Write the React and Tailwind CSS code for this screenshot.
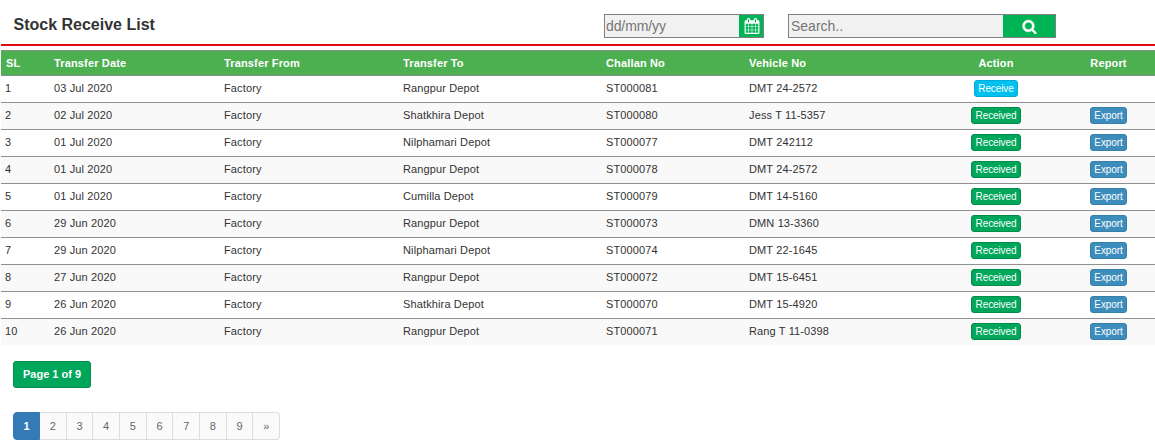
const rows = [
  ["1", "03 Jul 2020", "Rangpur Depot", "ST000081", "DMT 24-2572"],
  ["2", "02 Jul 2020", "Shatkhira Depot", "ST000080", "Jess T 11-5357"],
  ["3", "01 Jul 2020", "Nilphamari Depot", "ST000077", "DMT 242112"],
  ["4", "01 Jul 2020", "Rangpur Depot", "ST000078", "DMT 24-2572"],
  ["5", "01 Jul 2020", "Cumilla Depot", "ST000079", "DMT 14-5160"],
  ["6", "29 Jun 2020", "Rangpur Depot", "ST000073", "DMN 13-3360"],
  ["7", "29 Jun 2020", "Nilphamari Depot", "ST000074", "DMT 22-1645"],
  ["8", "27 Jun 2020", "Rangpur Depot", "ST000072", "DMT 15-6451"],
  ["9", "26 Jun 2020", "Shatkhira Depot", "ST000070", "DMT 15-4920"],
  ["10", "26 Jun 2020", "Rangpur Depot", "ST000071", "Rang T 11-0398"],
];

const cols =
  "grid grid-cols-[49px_170px_179px_203px_143px_184px_134px_91px] items-center";

function CalendarIcon() {
  return (
    <svg viewBox="0 0 1792 1792" className="size-4 fill-white">
      <path d="M192 1664h288v-288h-288v288zm352 0h320v-288h-320v288zm-352-352h288v-320h-288v320zm352 0h320v-320h-320v320zm-352-384h288v-288h-288v288zm736 736h320v-288h-320v288zm-384-736h320v-288h-320v288zm768 736h288v-288h-288v288zm-384-352h320v-320h-320v320zm-352-864v-288q0-13-9.500-22.500t-22.500-9.500h-64q-13 0-22.500 9.500t-9.500 22.500v288q0 13 9.500 22.500t22.500 9.500h64q13 0 22.500-9.500t9.500-22.500zm736 864h288v-320h-288v320zm-384-384h320v-288h-320v288zm384 0h288v-288h-288v288zm32-480v-288q0-13-9.500-22.500t-22.500-9.500h-64q-13 0-22.500 9.500t-9.500 22.500v288q0 13 9.500 22.500t22.500 9.500h64q13 0 22.500-9.500t9.500-22.500zm384-64v1280q0 52-38 90t-90 38h-1408q-52 0-90-38t-38-90v-1280q0-52 38-90t90-38h128v-96q0-66 47-113t113-47h64q66 0 113 47t47 113v96h384v-96q0-66 47-113t113-47h64q66 0 113 47t47 113v96h128q52 0 90 38t38 90z" />
    </svg>
  );
}

function SearchIcon() {
  return (
    <svg viewBox="0 0 1792 1792" className="size-[15px] fill-white stroke-white stroke-[50]">
      <path d="M1216 832q0-185-131.500-316.500t-316.500-131.500-316.500 131.500-131.500 316.500 131.500 316.500 316.500 131.500 316.500-131.500 131.500-316.500zm512 832q0 52-38 90t-90 38q-54 0-90-38l-343-342q-179 124-399 124-143 0-273.500-55.500t-225-150-150-225-55.500-273.500 55.500-273.500 150-225 225-150 273.500-55.500 273.500 55.500 225 150 150 225 55.500 273.500q0 220-124 399l343 343q37 37 37 90z" />
    </svg>
  );
}

export default function App() {
  return (
    <div className="h-[445px] w-[1155px] overflow-hidden bg-white font-['Liberation_Sans',Arial,sans-serif] text-[11px] text-[#333]">
      <header className="flex h-11 items-start">
        <h1 className="w-[604px] pt-[15px] pl-[13.500px] text-base leading-5 font-bold">
          Stock Receive List
        </h1>
        <div className="mt-[14px] flex h-6 w-40 border border-[#808080]">
          <input
            placeholder="dd/mm/yy"
            className="w-[134px] bg-[#f1f1f1] pl-px text-sm tracking-[-0.1px] outline-none placeholder:text-[#757575]"
          />
          <button className="flex flex-1 items-center justify-center bg-[#00b355] pl-px">
            <CalendarIcon />
          </button>
        </div>
        <div className="mt-[14px] ml-6 flex h-6 w-[268px] border border-[#808080]">
          <input
            placeholder="Search.."
            className="w-[214px] bg-[#f1f1f1] pl-[2px] text-sm outline-none placeholder:text-[#757575]"
          />
          <button className="flex flex-1 items-center justify-center bg-[#00b355] pl-px">
            <SearchIcon />
          </button>
        </div>
      </header>
      <div className="ml-px h-[2px] bg-[#df0a14]" />
      <main className="mt-1 ml-px">
        <div
          className={`${cols} h-[26px] border-y border-[#858f85] bg-[#4caf50] font-bold tracking-[0.15px] text-white`}
        >
          <span className="pl-[5px]">SL</span>
          <span className="pl-1">Transfer Date</span>
          <span className="pl-1">Transfer From</span>
          <span className="pl-1">Transfer To</span>
          <span className="pl-1">Challan No</span>
          <span className="pl-1">Vehicle No</span>
          <span className="text-center">Action</span>
          <span className="text-center">Report</span>
        </div>
        {rows.map(([sl, date, to, challan, vehicle], i) => (
          <div
            key={sl}
            className={`${cols} h-[27px] border-b border-[#909090] pb-[2px] tracking-[0.13px] last:h-[26px] last:border-b-0 even:bg-white odd:bg-[#f9f9f9]`}
          >
            <span className="pl-1">{sl}</span>
            <span className="pl-1">{date}</span>
            <span className="pl-1">Factory</span>
            <span className="pl-1">{to}</span>
            <span className="pl-1">{challan}</span>
            <span className="pl-1">{vehicle}</span>
            <span className="flex justify-center">
              {i === 0 ? (
                <button className="h-[17px] w-11 rounded-[3px] border border-[#00acd6] bg-[#00c0ef] text-[10px] leading-[15px] tracking-[-0.1px] text-white">
                  Receive
                </button>
              ) : (
                <button className="h-[17px] w-[50px] rounded-[3px] border border-[#008d4c] bg-[#00a65a] text-[10px] leading-[15px] tracking-[-0.1px] text-white">
                  Received
                </button>
              )}
            </span>
            <span className="flex justify-center">
              {i > 0 && (
                <button className="h-[17px] w-[37px] rounded-[3px] border border-[#367fa9] bg-[#3c8dbc] text-[10px] leading-[15px] tracking-[-0.1px] text-white">
                  Export
                </button>
              )}
            </span>
          </div>
        ))}
      </main>
      <footer className="pt-4 pl-[13px]">
        <button className="block h-[27px] w-[78px] rounded-[3px] border border-[#008d4c] bg-[#00a65a] text-[11px] font-bold text-white">
          Page 1 of 9
        </button>
        <nav className="mt-6 flex h-7 w-[267px] text-[#666]">
          <span className="flex w-[27px] items-center justify-center rounded-l border border-[#337ab7] bg-[#337ab7] font-bold text-white">
            1
          </span>
          {["2", "3", "4", "5", "6", "7", "8", "9", "»"].map((p) => (
            <span
              key={p}
              className="flex flex-1 items-center justify-center border-y border-r border-[#ddd] bg-[#fafafa] last:rounded-r"
            >
              {p}
            </span>
          ))}
        </nav>
      </footer>
    </div>
  );
}
